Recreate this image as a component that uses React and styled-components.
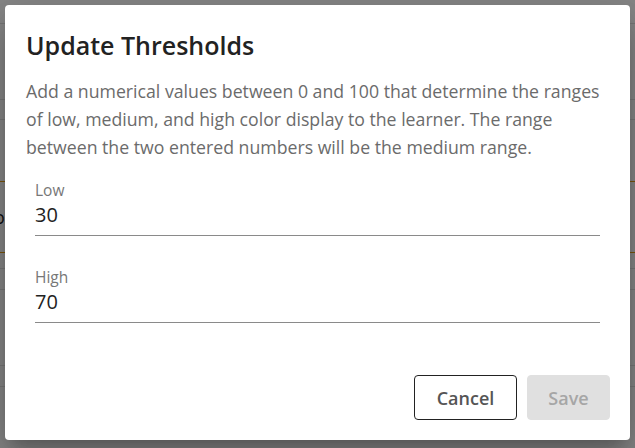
import React from "react";
import styled, { createGlobalStyle } from "styled-components";

const Global = createGlobalStyle`
  html, body { margin: 0; padding: 0; }
  body { font-family: "Open Sans", "Noto Sans", sans-serif; background: #fff; }
  * { box-sizing: border-box; }
`;

const Page = styled.div`
  width: 635px;
  height: 448px;
  overflow: hidden;
  position: relative;
  background: #fff;
`;

const BgRow = styled.div`
  height: ${(p) => p.h}px;
  border-bottom: 1px solid ${(p) => (p.accent ? "#e8a317" : "#e2e2e2")};
  display: flex;
  align-items: center;
  font-size: 18px;
  color: #222;
`;

const BgText = styled.span`
  margin-left: -6px;
`;

const Overlay = styled.div`
  position: absolute;
  inset: 0;
  background: rgba(0, 0, 0, 0.47);
  padding: 5px 5px 8px 5px;
  display: flex;
  align-items: flex-start;
`;

const Dialog = styled.div`
  width: 100%;
  height: 435px;
  background: #fff;
  border-radius: 4px;
  box-shadow: 0 11px 15px -7px rgba(0, 0, 0, 0.2),
    0 24px 38px 3px rgba(0, 0, 0, 0.14), 0 9px 46px 8px rgba(0, 0, 0, 0.12);
  display: flex;
  flex-direction: column;
  padding: 23px 20px 20px 21px;
`;

const Title = styled.h2`
  margin: 0;
  font-size: 25px;
  font-weight: 600;
  line-height: 34px;
  color: #222;
`;

const Body = styled.p`
  margin: 15px 0 0 0;
  font-size: 17.7px;
  line-height: 28px;
  color: #6b6b6b;
`;

const Fields = styled.div`
  display: flex;
  flex-direction: column;
  gap: 31px;
  padding: 19px 10px 0 9px;
`;

const Field = styled.label`
  display: flex;
  flex-direction: column;
  gap: 2px;
  border-bottom: 1px solid #8a8a8a;
  padding-bottom: 7px;
`;

const Label = styled.span`
  font-size: 15.5px;
  line-height: 20px;
  color: #777;
`;

const Value = styled.span`
  font-size: 20px;
  line-height: 26px;
  color: #222;
`;

const Actions = styled.div`
  margin-top: auto;
  display: flex;
  justify-content: flex-end;
  gap: 10px;
`;

const Button = styled.button`
  height: 45px;
  width: ${(p) => (p.primary ? "83px" : "103px")};
  padding: 0;
  font-family: inherit;
  font-size: 18px;
  font-weight: 600;
  border-radius: 4px;
  border: ${(p) => (p.primary ? "1px solid #e0e0e0" : "1px solid #222")};
  background: ${(p) => (p.primary ? "#e0e0e0" : "#fff")};
  color: ${(p) => (p.primary ? "#a6a6a6" : "#555")};
  cursor: pointer;
`;

const rows = [
  { h: 24 },
  { h: 76 },
  { h: 20 },
  { h: 62, accent: true },
  { h: 71, accent: true, text: "o" },
  { h: 16 },
  { h: 21 },
  { h: 76 },
  { h: 21 },
];

export default function App() {
  return (
    <Page>
      <Global />
      {rows.map((r, i) => (
        <BgRow key={i} h={r.h} accent={r.accent ? 1 : 0}>
          {r.text && <BgText>{r.text}</BgText>}
        </BgRow>
      ))}
      <Overlay>
        <Dialog role="dialog">
          <Title>Update Thresholds</Title>
          <Body>
            Add a numerical values between 0 and 100 that determine the ranges
            of low, medium, and high color display to the learner. The range
            between the two entered numbers will be the medium range.
          </Body>
          <Fields>
            <Field>
              <Label>Low</Label>
              <Value>30</Value>
            </Field>
            <Field>
              <Label>High</Label>
              <Value>70</Value>
            </Field>
          </Fields>
          <Actions>
            <Button>Cancel</Button>
            <Button primary>Save</Button>
          </Actions>
        </Dialog>
      </Overlay>
    </Page>
  );
}
